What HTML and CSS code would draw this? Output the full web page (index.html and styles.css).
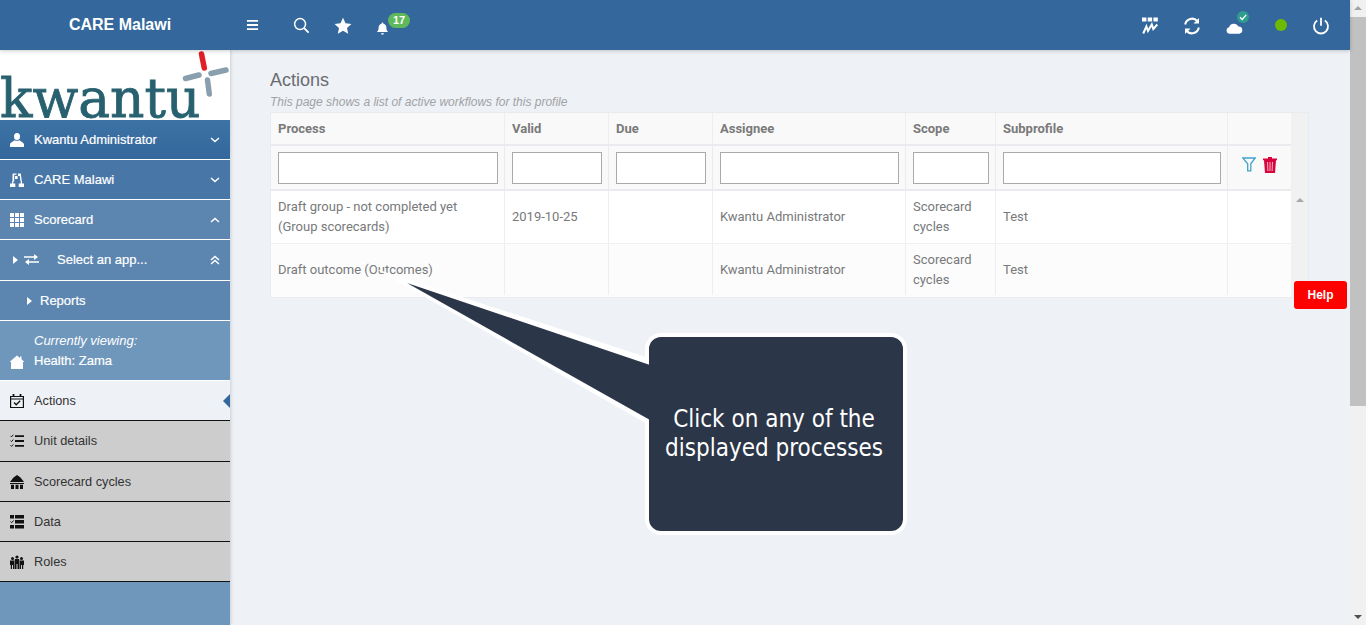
FILE: index.html
```html
<!DOCTYPE html>
<html lang="en">
<head>
<meta charset="utf-8">
<title>Actions</title>
<link rel="stylesheet" href="styles.css">
</head>
<body>
<div class="page">
  <header class="topbar">
    <div class="brand">CARE Malawi</div>
    <div class="tools">
      <svg class="ic burger" viewBox="0 0 14 12"><path d="M1 1.500h12M1 6h12M1 10.500h12" stroke="#fff" stroke-width="2" fill="none"/></svg>
      <svg class="ic search" viewBox="0 0 18 18"><circle cx="7.500" cy="7.500" r="5.800" stroke="#fff" stroke-width="1.600" fill="none"/><path d="M11.800 11.800L16.500 16.500" stroke="#fff" stroke-width="2" fill="none"/></svg>
      <svg class="ic star" viewBox="0 0 18 18"><path d="M9 .8l2.500 5.400 5.900.7-4.400 4 1.200 5.800L9 13.800l-5.200 2.900L5 10.900.6 6.900l5.900-.7z" fill="#fff"/></svg>
      <span class="bellwrap">
        <svg class="ic bell" viewBox="0 0 14 15"><path d="M7 .5c.6 0 1 .4 1 1v.5c2.300.5 3.500 2.300 3.500 4.500 0 2.500.7 3.700 2 5H.5c1.300-1.300 2-2.500 2-5C2.500 4.300 3.700 2.500 6 2v-.5c0-.6.4-1 1-1zM5.300 13h3.400c0 1-.7 1.700-1.700 1.700S5.300 14 5.300 13z" fill="#fff"/></svg>
        <span class="badge">17</span>
      </span>
    </div>
    <div class="status">
      <svg class="ic chart" viewBox="0 0 18 18"><path d="M1 .5h4.400v4H1zM6.700.5h4.400v4H6.700zM12.400.5h4.400v4h-4.400z" fill="#fff"/><path d="M2.200 16.500L5.400 9.500l1.600 4.500 3.800-6.500 1.500 4.500 4-4.500" stroke="#fff" stroke-width="2" fill="none"/></svg>
      <svg class="ic sync" viewBox="0 0 18 18"><path d="M2.200 7.500A7 7 0 0 1 14.300 4M15.800 10.500A7 7 0 0 1 3.700 14" stroke="#fff" stroke-width="2" fill="none"/><path d="M16 1v5.500h-5.500zM2 17v-5.500h5.500z" fill="#fff"/></svg>
      <span class="cloudwrap">
        <svg class="ic cloud" viewBox="0 0 18 12"><path d="M4 12a3.500 3.500 0 0 1-.7-6.900A5.200 5.200 0 0 1 13 4.500 3.800 3.800 0 0 1 14.200 12z" fill="#fff"/></svg>
        <span class="cloudcheck"><svg viewBox="0 0 12 12"><path d="M3 6.300l2.200 2.200L9.200 3.800" stroke="#fff" stroke-width="1.300" fill="none"/></svg></span>
      </span>
      <span class="dot"></span>
      <svg class="ic power" viewBox="0 0 18 18"><path d="M5.200 3.600a7 7 0 1 0 7.600 0" stroke="#fff" stroke-width="1.800" fill="none"/><path d="M9 .8v8" stroke="#fff" stroke-width="1.800" fill="none"/></svg>
    </div>
  </header>
  <div class="body">
    <aside class="sidebar">
      <div class="logo">
        <span class="logotext">kwantu</span>
        <svg class="cross" viewBox="0 0 50 50"><g stroke-linecap="round" stroke-width="5.500" fill="none"><path d="M21.500 4l2.800 14" stroke="#e01f26"/><path d="M5.500 28.500l13.500-3.500M31 23.500l15-3.500" stroke="#8a9fae"/><path d="M27.500 30l1.800 14" stroke="#8a9fae"/></g></svg>
      </div>
      <nav class="nav">
        <a class="row r1"><svg class="ni" viewBox="0 0 14 14"><ellipse cx="7" cy="3.500" rx="3" ry="3.500" fill="#fff"/><path d="M0 14v-2.500C0 9.500 3 8.500 4.500 7.200 5.500 8 8.500 8 9.500 7.200 11 8.500 14 9.500 14 11.500V14z" fill="#fff"/></svg><b class="lbl">Kwantu Administrator</b><svg class="chev" viewBox="0 0 10 6"><path d="M1 1l4 3.500L9 1" stroke="#fff" stroke-width="1.500" fill="none"/></svg></a>
        <a class="row r2"><svg class="ni" viewBox="0 0 14 14"><path d="M2.500 8.500V1.500c0-.6.4-1 1-1h3v1.300H4.200v6.700zM8 .5h2.800l1 7.500h-1.400L9.800 3H8zM5 3h2.600v3H5zM0 10.500h5.300V14H0zM8.700 10.500H14V14H8.700zM2 8.500h1.300v2H2zM10.700 8h1.300v2.500h-1.300z" fill="#fff"/></svg><b class="lbl">CARE Malawi</b><svg class="chev" viewBox="0 0 10 6"><path d="M1 1l4 3.500L9 1" stroke="#fff" stroke-width="1.500" fill="none"/></svg></a>
        <a class="row r3"><svg class="ni" viewBox="0 0 14 14"><path d="M0 0h4v4H0zM5 0h4v4H5zM10 0h4v4h-4zM0 5h4v4H0zM5 5h4v4H5zM10 5h4v4h-4zM0 10h4v4H0zM5 10h4v4H5zM10 10h4v4h-4z" fill="#fff"/></svg><b class="lbl">Scorecard</b><svg class="chev" viewBox="0 0 10 6"><path d="M1 5l4-3.500L9 5" stroke="#fff" stroke-width="1.500" fill="none"/></svg></a>
        <a class="row r3 rapp"><span class="tri"></span><svg class="swap" viewBox="0 0 15 11"><path d="M0 3h11M15 8H4" stroke="#fff" stroke-width="1.500"/><path d="M10 0l4 3-4 3zM5 5L1 8l4 3z" fill="#fff"/></svg><b class="lbl">Select an app...</b><svg class="chev dbl" viewBox="0 0 10 10"><path d="M1 5l4-3.500L9 5M1 9l4-3.500L9 9" stroke="#fff" stroke-width="1.500" fill="none"/></svg></a>
        <a class="row r3 rrep"><span class="tri"></span><b class="lbl">Reports</b></a>
        <div class="viewing"><svg class="ni home" viewBox="0 0 14 14"><path d="M7 .5l3 2.500V1.500h1.500v2.800L14 6.500V7h-1v7H1V7H0v-.5z" fill="#fff"/></svg><div class="vt"><i>Currently viewing:</i><b class="lbl">Health: Zama</b></div></div>
        <a class="mi active"><svg class="ni" viewBox="0 0 14 14"><path d="M.6 2.500h12.800v11H.6zM.6 2.500h12.800v2.500H.6z" stroke="#111" stroke-width="1.200" fill="none"/><path d="M3.500 0v3M10.500 0v3" stroke="#111" stroke-width="1.800"/><path d="M4 8.500l2.200 2.300L10.200 6.800" stroke="#111" stroke-width="1.300" fill="none"/></svg><span>Actions</span><em class="caret"></em></a>
        <a class="mi mi-tall"><svg class="ni" viewBox="0 0 14 14"><path d="M5 2.200h9M5 7h9M5 11.800h9" stroke="#111" stroke-width="1.800"/><path d="M.5 1.800l1 1L3.300.8M.5 6.600l1 1 1.800-2M.5 11.400l1 1 1.800-2" stroke="#111" stroke-width="1" fill="none"/></svg><span>Unit details</span></a>
        <a class="mi"><svg class="ni" viewBox="0 0 14 14"><path d="M7 0l3.500 2.500L14 7H0l3.500-4.500zM0 8h14v1H0zM1 9.800h3V14H1zM5.500 9.800h3V14h-3zM10 9.800h3V14h-3z" fill="#111"/></svg><span>Scorecard cycles</span></a>
        <a class="mi"><svg class="ni" viewBox="0 0 14 14"><path d="M0 0h4v3.500H0zM5 0h9v3.500H5zM5 5h9v3.500H5zM0 10h4v3.500H0zM5 10h9v3.500H5z" fill="#111"/><path d="M.5 6.500l1.200 1.200L3.500 5.500" stroke="#111" stroke-width="1" fill="none"/></svg><span>Data</span></a>
        <a class="mi"><svg class="ni" viewBox="0 0 14 14"><circle cx="2.500" cy="3.500" r="1.500" fill="#111"/><circle cx="7" cy="2" r="1.600" fill="#111"/><circle cx="11.500" cy="3.500" r="1.500" fill="#111"/><path d="M0 5.500h4.300V14H3v-4H2v4H.8V10H0zM4.800 4h4.400v10H7.500V9h-1v5H4.800zM9.700 5.500H14V10h-.8v4H12v-4h-1v4H9.700z" fill="#111"/></svg><span>Roles</span></a>
      </nav>
    </aside>
    <main class="main">
      <h1 class="title">Actions</h1>
      <p class="sub">This page shows a list of active workflows for this profile</p>
      <div class="tablewrap">
        <div class="tablecol">
          <div class="grid ghead">
            <div class="cell">Process</div><div class="cell">Valid</div><div class="cell">Due</div><div class="cell">Assignee</div><div class="cell">Scope</div><div class="cell">Subprofile</div><div class="cell"></div>
          </div>
          <div class="grid gfilter">
            <div class="cell"><input class="fi" type="text"></div><div class="cell"><input class="fi" type="text"></div><div class="cell"><input class="fi" type="text"></div><div class="cell"><input class="fi" type="text"></div><div class="cell"><input class="fi" type="text"></div><div class="cell"><input class="fi" type="text"></div>
            <div class="cell acts">
              <svg class="fil" viewBox="0 0 14 15"><path d="M.8 1h12.400L8.800 6.800v7H5.700v-7z" stroke="#3fa4c9" stroke-width="1.300" fill="none"/></svg>
              <svg class="trash" viewBox="0 0 14 16"><path d="M0 1.500h14v1.800H0zM5 0h4v1.500H5zM1 3.300h12L12 16H2z" fill="#d9043d"/><path d="M4.500 5l.4 9M7 5v9M9.500 5l-.4 9" stroke="#f3b6c6" stroke-width="1"/></svg>
            </div>
          </div>
          <div class="grid grow g1">
            <div class="cell">Draft group - not completed yet (Group scorecards)</div><div class="cell">2019-10-25</div><div class="cell"></div><div class="cell">Kwantu Administrator</div><div class="cell">Scorecard cycles</div><div class="cell">Test</div><div class="cell"></div>
          </div>
          <div class="grid grow g2">
            <div class="cell">Draft outcome (Outcomes)</div><div class="cell"></div><div class="cell"></div><div class="cell">Kwantu Administrator</div><div class="cell">Scorecard cycles</div><div class="cell">Test</div><div class="cell"></div>
          </div>
        </div>
        <div class="tscroll"><span class="tup"></span></div>
      </div>
    </main>
  </div>
  <div class="callout">Click on any of the displayed processes</div>
  <svg class="pointer" viewBox="0 0 272 160"><path d="M-4-1L269 88V155z" fill="#fff"/><path d="M27 13L270 95V150z" fill="#2b3648"/></svg>
  <a class="help">Help</a>
  <div class="vscroll"><span class="up"></span><span class="thumb"></span><span class="down"></span></div>
</div>
</body>
</html>
```
FILE: styles.css
```css
* { box-sizing: border-box; }
html, body { margin: 0; padding: 0; height: 100%; overflow: hidden; }
body { font-family: "Liberation Sans", Arial, sans-serif; background: #eef1f6; }
.page { position: relative; width: 1366px; height: 625px; overflow: hidden; }
svg { display: block; flex: none; }

.topbar { display: flex; align-items: center; width: 1350px; height: 50px; background: #34689c; box-shadow: 0 1px 4px rgba(0,0,0,.2); position: relative; z-index: 2; color: #fff; }
.brand { width: 230px; padding-left: 10px; text-align: center; font-size: 16px; font-weight: 700; }
.tools { display: flex; align-items: center; margin-left: 16px; }
.ic { width: 18px; height: 18px; }
.burger { width: 13px; height: 12px; margin-right: 34px; }
.search { width: 17px; height: 17px; margin-right: 24px; margin-top: 1px; }
.star { width: 18px; height: 18px; margin-right: 24px; margin-top: 1px; }
.bellwrap { position: relative; display: block; }
.bell { width: 13px; height: 13px; margin-top: 6px; }
.badge { position: absolute; left: 12px; top: -3px; width: 22px; height: 15px; border-radius: 8px; background: #5fb95a; color: #fff; font-size: 11px; font-weight: 700; line-height: 14px; text-align: center; }
.status { margin-left: auto; display: flex; align-items: center; padding-right: 20px; }
.chart { margin-right: 24px; margin-top: 1px; }
.sync { margin-right: 25px; margin-top: 1px; }
.cloudwrap { position: relative; display: block; margin-right: 32px; }
.cloud { width: 17px; height: 12px; margin-top: 6px; }
.cloudcheck { position: absolute; left: 11px; top: -5px; width: 12px; height: 12px; border-radius: 50%; background: #2f9c8f; display: block; }
.dot { width: 12px; height: 12px; border-radius: 50%; background: #6dbb00; margin-right: 25px; }
.power { margin-top: 1px; }

.body { display: flex; height: 575px; }
.sidebar { width: 230px; flex: none; background: #6f97bc; box-shadow: 1px 0 3px rgba(0,0,0,.15); }
.logo { position: relative; height: 70px; background: #fff; }
.logotext { position: absolute; left: 0; top: 29px; font-family: "DejaVu Serif", serif; font-size: 53.500px; line-height: 40px; color: #27606f; -webkit-text-stroke: .8px #27606f; }
.cross { position: absolute; left: 180px; top: 0; width: 50px; height: 50px; }
.row { display: flex; align-items: center; height: 40px; border-bottom: 1px solid #fff; color: #fff; padding-left: 10px; }
.r1 { background: linear-gradient(#3d72a5, #34689c); }
.r2 { background: #4877a7; }
.r3 { background: #5c86b0; }
.rapp { height: 41px; padding: 0 0 1px 13px; }
.rrep { padding-left: 27px; }
.rrep .tri { margin-right: 8px; }
.ni { width: 14px; height: 14px; margin-right: 10px; }
.home { margin-bottom: -1px; }
.lbl { font-size: 13px; font-weight: 400; -webkit-text-stroke: .2px #fff; }
.chev { width: 10px; height: 6px; margin-left: auto; margin-right: 10px; }
.dbl { height: 10px; }
.tri { width: 0; height: 0; border-left: 5px solid #fff; border-top: 4px solid transparent; border-bottom: 4px solid transparent; margin-right: 6px; }
.swap { width: 15px; height: 11px; margin-right: 18px; }
.viewing { display: flex; align-items: flex-end; height: 60px; padding: 0 0 12px 10px; color: #fff; background: #6f97bc; border-bottom: 1px solid #fff; }
.vt { display: flex; flex-direction: column; gap: 5px; font-size: 13px; }
.vt i { line-height: 15px; }
.vt .lbl { line-height: 15px; }
.mi { display: flex; align-items: center; position: relative; height: 40px; padding-left: 10px; background: #cdcdcd; color: #333; font-size: 12.750px; border-bottom: 1px solid #111; }
.mi-tall { height: 41px; padding-bottom: 1px; }
.mi.active { background: #eef1f6; }
.caret { position: absolute; right: 0; top: 13px; width: 7px; height: 14px; background: #34689c; clip-path: polygon(100% 0, 100% 100%, 0 50%); }

.main { flex: 1; padding: 20px 41px 0 40px; min-width: 0; }
.title { margin: 0; font-size: 18px; font-weight: 400; line-height: 20px; color: #6a6c70; }
.sub { margin: 2px 0 0; font-size: 12px; font-style: italic; line-height: 20px; color: #a0a2a5; }
.tablewrap { display: flex; width: 1039px; border: 1px solid #e9ebee; background: #f1f1f1; font-family: Roboto, sans-serif; font-size: 13px; color: #77797b; }
.tablecol { width: 1020px; flex: none; }
.tscroll { flex: 1; position: relative; }
.tup { position: absolute; left: 5px; top: 85px; border-left: 4px solid transparent; border-right: 4px solid transparent; border-bottom: 4px solid #a8a8a8; }
.grid { display: grid; grid-template-columns: 234px 104px 104px 193px 90px 232px 63px; }
.cell { border-right: 1px solid #eee; padding: 0 7px; display: flex; align-items: center; line-height: 20px; }
.cell:last-child { border-right: 0; }
.ghead { height: 33px; background: #f9f9f9; border-bottom: 2px solid #e9ebee; font-weight: 700; color: #7a7a7a; }
.gfilter { height: 45px; background: #f9f9f9; border-bottom: 2px solid #e9ebee; }
.gfilter .cell { border-right-color: #e9ebee; padding-right: 6px; }
.fi { width: 100%; height: 32px; border: 1px solid #aaa; background: #fff; padding: 0; }
.gfilter .acts { gap: 7px; padding: 11px 0 0 14px; align-items: flex-start; }
.fil { width: 14px; height: 15px; }
.trash { width: 14px; height: 16px; }
.grow { background: #fff; border-bottom: 1px solid #f0f0f0; }
.g1 { height: 53px; }
.g2 { height: 53px; background: #fcfcfc; border-bottom: 0; padding-bottom: 2px; }

.callout { position: absolute; left: 645px; top: 333px; width: 262px; height: 202px; border: 4px solid #fff; border-radius: 16px; background: #2b3648; color: #fff; z-index: 3; font-family: "DejaVu Sans", sans-serif; font-stretch: condensed; font-size: 24px; line-height: 29px; text-align: center; padding: 68px 4px 0 0; }
.pointer { position: absolute; left: 380px; top: 270px; width: 272px; height: 160px; z-index: 4; overflow: visible; }
.help { position: absolute; left: 1294px; top: 281px; width: 53px; height: 28px; border-radius: 3px; background: #f00; color: #fff; font-size: 12px; font-weight: 700; line-height: 28px; text-align: center; z-index: 5; }
.vscroll { position: absolute; right: 0; top: 0; width: 16px; height: 625px; background: #f1f1f1; }
.up { position: absolute; left: 4px; top: 6px; border-left: 4px solid transparent; border-right: 4px solid transparent; border-bottom: 4px solid #a3a3a3; }
.thumb { position: absolute; left: 0; top: 17px; width: 16px; height: 389px; background: #c1c1c1; }
.down { position: absolute; left: 4px; top: 615px; border-left: 4px solid transparent; border-right: 4px solid transparent; border-top: 4px solid #505050; }
```
